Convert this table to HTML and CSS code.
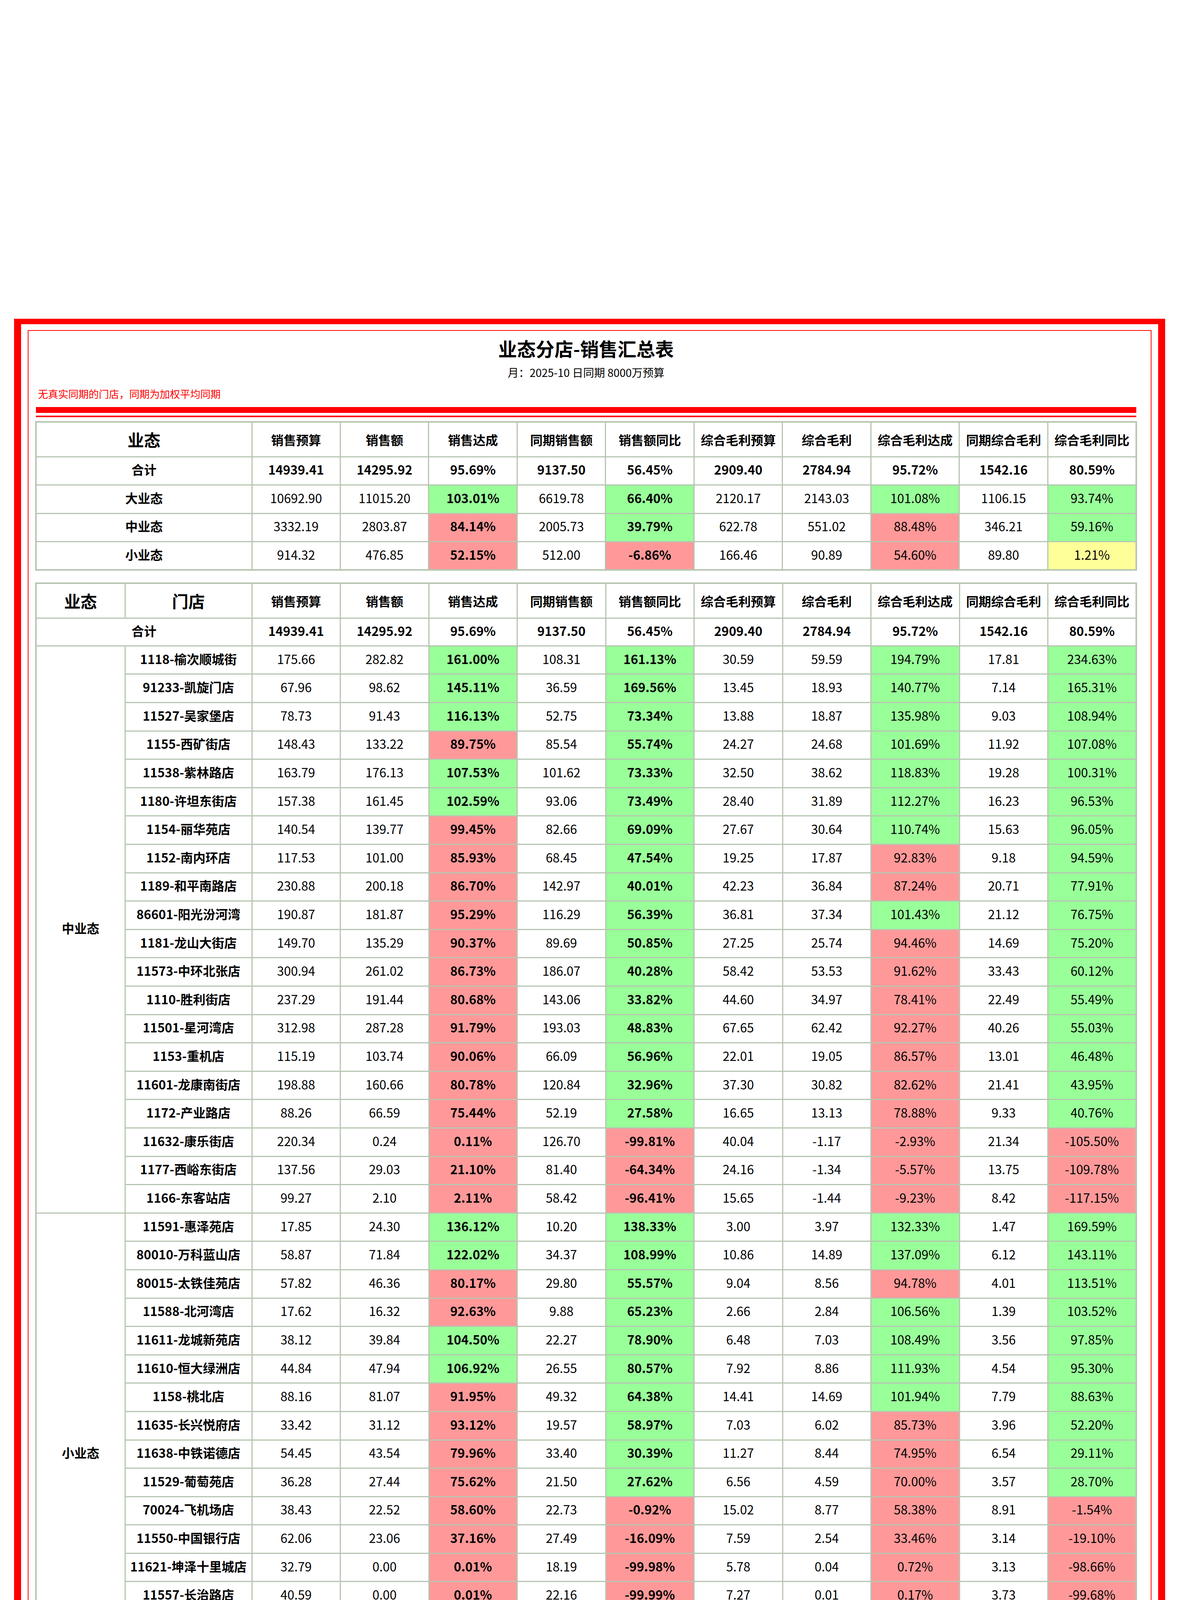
FILE: index.html
```html
<!DOCTYPE html>
<html lang="zh-CN">
<head>
<meta charset="utf-8">
<title>业态分店-销售汇总表</title>
<link rel="stylesheet" href="styles.css">
</head>
<body>
<div class="page">
<div class="frame">
<div class="inner">
<div class="title">业态分店-销售汇总表</div>
<div class="sub">月：2025-10 日同期 8000万预算</div>
<div class="note">无真实同期的门店，同期为加权平均同期</div>
<div class="bar"></div>
<div class="line"></div>

<table class="t1">
<colgroup><col class="c1"><col class="c2"><col><col><col><col><col><col><col><col><col><col></colgroup>
<tr class="hr"><th colspan="2" class="big">业态</th><th>销售预算</th><th>销售额</th><th>销售达成</th><th>同期销售额</th><th>销售额同比</th><th>综合毛利预算</th><th>综合毛利</th><th>综合毛利达成</th><th>同期综合毛利</th><th>综合毛利同比</th></tr>
<tr class="dr sum"><td colspan="2">合计</td><td>14939.41</td><td>14295.92</td><td>95.69%</td><td>9137.50</td><td>56.45%</td><td>2909.40</td><td>2784.94</td><td>95.72%</td><td>1542.16</td><td>80.59%</td></tr>
<tr class="dr"><td colspan="2" class="b">大业态</td><td>10692.90</td><td>11015.20</td><td class="b g">103.01%</td><td>6619.78</td><td class="b g">66.40%</td><td>2120.17</td><td>2143.03</td><td class="g">101.08%</td><td>1106.15</td><td class="g">93.74%</td></tr>
<tr class="dr"><td colspan="2" class="b">中业态</td><td>3332.19</td><td>2803.87</td><td class="b r">84.14%</td><td>2005.73</td><td class="b g">39.79%</td><td>622.78</td><td>551.02</td><td class="r">88.48%</td><td>346.21</td><td class="g">59.16%</td></tr>
<tr class="dr"><td colspan="2" class="b">小业态</td><td>914.32</td><td>476.85</td><td class="b r">52.15%</td><td>512.00</td><td class="b r">-6.86%</td><td>166.46</td><td>90.89</td><td class="r">54.60%</td><td>89.80</td><td class="y">1.21%</td></tr>
</table>

<table class="t2">
<colgroup><col class="c1"><col class="c2"><col><col><col><col><col><col><col><col><col><col></colgroup>
<tr class="hr"><th class="big">业态</th><th class="big">门店</th><th>销售预算</th><th>销售额</th><th>销售达成</th><th>同期销售额</th><th>销售额同比</th><th>综合毛利预算</th><th>综合毛利</th><th>综合毛利达成</th><th>同期综合毛利</th><th>综合毛利同比</th></tr>
<tr class="sr sum"><td colspan="2">合计</td><td>14939.41</td><td>14295.92</td><td>95.69%</td><td>9137.50</td><td>56.45%</td><td>2909.40</td><td>2784.94</td><td>95.72%</td><td>1542.16</td><td>80.59%</td></tr>

<tr class="dr"><td rowspan="20" class="b">中业态</td><td class="b">1118-榆次顺城街</td><td>175.66</td><td>282.82</td><td class="b g">161.00%</td><td>108.31</td><td class="b g">161.13%</td><td>30.59</td><td>59.59</td><td class="g">194.79%</td><td>17.81</td><td class="g">234.63%</td></tr>
<tr class="dr"><td class="b">91233-凯旋门店</td><td>67.96</td><td>98.62</td><td class="b g">145.11%</td><td>36.59</td><td class="b g">169.56%</td><td>13.45</td><td>18.93</td><td class="g">140.77%</td><td>7.14</td><td class="g">165.31%</td></tr>
<tr class="dr"><td class="b">11527-吴家堡店</td><td>78.73</td><td>91.43</td><td class="b g">116.13%</td><td>52.75</td><td class="b g">73.34%</td><td>13.88</td><td>18.87</td><td class="g">135.98%</td><td>9.03</td><td class="g">108.94%</td></tr>
<tr class="dr"><td class="b">1155-西矿街店</td><td>148.43</td><td>133.22</td><td class="b r">89.75%</td><td>85.54</td><td class="b g">55.74%</td><td>24.27</td><td>24.68</td><td class="g">101.69%</td><td>11.92</td><td class="g">107.08%</td></tr>
<tr class="dr"><td class="b">11538-紫林路店</td><td>163.79</td><td>176.13</td><td class="b g">107.53%</td><td>101.62</td><td class="b g">73.33%</td><td>32.50</td><td>38.62</td><td class="g">118.83%</td><td>19.28</td><td class="g">100.31%</td></tr>
<tr class="dr"><td class="b">1180-许坦东街店</td><td>157.38</td><td>161.45</td><td class="b g">102.59%</td><td>93.06</td><td class="b g">73.49%</td><td>28.40</td><td>31.89</td><td class="g">112.27%</td><td>16.23</td><td class="g">96.53%</td></tr>
<tr class="dr"><td class="b">1154-丽华苑店</td><td>140.54</td><td>139.77</td><td class="b r">99.45%</td><td>82.66</td><td class="b g">69.09%</td><td>27.67</td><td>30.64</td><td class="g">110.74%</td><td>15.63</td><td class="g">96.05%</td></tr>
<tr class="dr"><td class="b">1152-南内环店</td><td>117.53</td><td>101.00</td><td class="b r">85.93%</td><td>68.45</td><td class="b g">47.54%</td><td>19.25</td><td>17.87</td><td class="r">92.83%</td><td>9.18</td><td class="g">94.59%</td></tr>
<tr class="dr"><td class="b">1189-和平南路店</td><td>230.88</td><td>200.18</td><td class="b r">86.70%</td><td>142.97</td><td class="b g">40.01%</td><td>42.23</td><td>36.84</td><td class="r">87.24%</td><td>20.71</td><td class="g">77.91%</td></tr>
<tr class="dr"><td class="b">86601-阳光汾河湾</td><td>190.87</td><td>181.87</td><td class="b r">95.29%</td><td>116.29</td><td class="b g">56.39%</td><td>36.81</td><td>37.34</td><td class="g">101.43%</td><td>21.12</td><td class="g">76.75%</td></tr>
<tr class="dr"><td class="b">1181-龙山大街店</td><td>149.70</td><td>135.29</td><td class="b r">90.37%</td><td>89.69</td><td class="b g">50.85%</td><td>27.25</td><td>25.74</td><td class="r">94.46%</td><td>14.69</td><td class="g">75.20%</td></tr>
<tr class="dr"><td class="b">11573-中环北张店</td><td>300.94</td><td>261.02</td><td class="b r">86.73%</td><td>186.07</td><td class="b g">40.28%</td><td>58.42</td><td>53.53</td><td class="r">91.62%</td><td>33.43</td><td class="g">60.12%</td></tr>
<tr class="dr"><td class="b">1110-胜利街店</td><td>237.29</td><td>191.44</td><td class="b r">80.68%</td><td>143.06</td><td class="b g">33.82%</td><td>44.60</td><td>34.97</td><td class="r">78.41%</td><td>22.49</td><td class="g">55.49%</td></tr>
<tr class="dr"><td class="b">11501-星河湾店</td><td>312.98</td><td>287.28</td><td class="b r">91.79%</td><td>193.03</td><td class="b g">48.83%</td><td>67.65</td><td>62.42</td><td class="r">92.27%</td><td>40.26</td><td class="g">55.03%</td></tr>
<tr class="dr"><td class="b">1153-重机店</td><td>115.19</td><td>103.74</td><td class="b r">90.06%</td><td>66.09</td><td class="b g">56.96%</td><td>22.01</td><td>19.05</td><td class="r">86.57%</td><td>13.01</td><td class="g">46.48%</td></tr>
<tr class="dr"><td class="b">11601-龙康南街店</td><td>198.88</td><td>160.66</td><td class="b r">80.78%</td><td>120.84</td><td class="b g">32.96%</td><td>37.30</td><td>30.82</td><td class="r">82.62%</td><td>21.41</td><td class="g">43.95%</td></tr>
<tr class="dr"><td class="b">1172-产业路店</td><td>88.26</td><td>66.59</td><td class="b r">75.44%</td><td>52.19</td><td class="b g">27.58%</td><td>16.65</td><td>13.13</td><td class="r">78.88%</td><td>9.33</td><td class="g">40.76%</td></tr>
<tr class="dr"><td class="b">11632-康乐街店</td><td>220.34</td><td>0.24</td><td class="b r">0.11%</td><td>126.70</td><td class="b r">-99.81%</td><td>40.04</td><td>-1.17</td><td class="r">-2.93%</td><td>21.34</td><td class="r">-105.50%</td></tr>
<tr class="dr"><td class="b">1177-西峪东街店</td><td>137.56</td><td>29.03</td><td class="b r">21.10%</td><td>81.40</td><td class="b r">-64.34%</td><td>24.16</td><td>-1.34</td><td class="r">-5.57%</td><td>13.75</td><td class="r">-109.78%</td></tr>
<tr class="dr"><td class="b">1166-东客站店</td><td>99.27</td><td>2.10</td><td class="b r">2.11%</td><td>58.42</td><td class="b r">-96.41%</td><td>15.65</td><td>-1.44</td><td class="r">-9.23%</td><td>8.42</td><td class="r">-117.15%</td></tr>

<tr class="dr"><td rowspan="17" class="b">小业态</td><td class="b">11591-惠泽苑店</td><td>17.85</td><td>24.30</td><td class="b g">136.12%</td><td>10.20</td><td class="b g">138.33%</td><td>3.00</td><td>3.97</td><td class="g">132.33%</td><td>1.47</td><td class="g">169.59%</td></tr>
<tr class="dr"><td class="b">80010-万科蓝山店</td><td>58.87</td><td>71.84</td><td class="b g">122.02%</td><td>34.37</td><td class="b g">108.99%</td><td>10.86</td><td>14.89</td><td class="g">137.09%</td><td>6.12</td><td class="g">143.11%</td></tr>
<tr class="dr"><td class="b">80015-太铁佳苑店</td><td>57.82</td><td>46.36</td><td class="b r">80.17%</td><td>29.80</td><td class="b g">55.57%</td><td>9.04</td><td>8.56</td><td class="r">94.78%</td><td>4.01</td><td class="g">113.51%</td></tr>
<tr class="dr"><td class="b">11588-北河湾店</td><td>17.62</td><td>16.32</td><td class="b r">92.63%</td><td>9.88</td><td class="b g">65.23%</td><td>2.66</td><td>2.84</td><td class="g">106.56%</td><td>1.39</td><td class="g">103.52%</td></tr>
<tr class="dr"><td class="b">11611-龙城新苑店</td><td>38.12</td><td>39.84</td><td class="b g">104.50%</td><td>22.27</td><td class="b g">78.90%</td><td>6.48</td><td>7.03</td><td class="g">108.49%</td><td>3.56</td><td class="g">97.85%</td></tr>
<tr class="dr"><td class="b">11610-恒大绿洲店</td><td>44.84</td><td>47.94</td><td class="b g">106.92%</td><td>26.55</td><td class="b g">80.57%</td><td>7.92</td><td>8.86</td><td class="g">111.93%</td><td>4.54</td><td class="g">95.30%</td></tr>
<tr class="dr"><td class="b">1158-桃北店</td><td>88.16</td><td>81.07</td><td class="b r">91.95%</td><td>49.32</td><td class="b g">64.38%</td><td>14.41</td><td>14.69</td><td class="g">101.94%</td><td>7.79</td><td class="g">88.63%</td></tr>
<tr class="dr"><td class="b">11635-长兴悦府店</td><td>33.42</td><td>31.12</td><td class="b r">93.12%</td><td>19.57</td><td class="b g">58.97%</td><td>7.03</td><td>6.02</td><td class="r">85.73%</td><td>3.96</td><td class="g">52.20%</td></tr>
<tr class="dr"><td class="b">11638-中铁诺德店</td><td>54.45</td><td>43.54</td><td class="b r">79.96%</td><td>33.40</td><td class="b g">30.39%</td><td>11.27</td><td>8.44</td><td class="r">74.95%</td><td>6.54</td><td class="g">29.11%</td></tr>
<tr class="dr"><td class="b">11529-葡萄苑店</td><td>36.28</td><td>27.44</td><td class="b r">75.62%</td><td>21.50</td><td class="b g">27.62%</td><td>6.56</td><td>4.59</td><td class="r">70.00%</td><td>3.57</td><td class="g">28.70%</td></tr>
<tr class="dr"><td class="b">70024-飞机场店</td><td>38.43</td><td>22.52</td><td class="b r">58.60%</td><td>22.73</td><td class="b r">-0.92%</td><td>15.02</td><td>8.77</td><td class="r">58.38%</td><td>8.91</td><td class="r">-1.54%</td></tr>
<tr class="dr"><td class="b">11550-中国银行店</td><td>62.06</td><td>23.06</td><td class="b r">37.16%</td><td>27.49</td><td class="b r">-16.09%</td><td>7.59</td><td>2.54</td><td class="r">33.46%</td><td>3.14</td><td class="r">-19.10%</td></tr>
<tr class="dr"><td class="b">11621-坤泽十里城店</td><td>32.79</td><td>0.00</td><td class="b r">0.01%</td><td>18.19</td><td class="b r">-99.98%</td><td>5.78</td><td>0.04</td><td class="r">0.72%</td><td>3.13</td><td class="r">-98.66%</td></tr>
<tr class="dr"><td class="b">11557-长治路店</td><td>40.59</td><td>0.00</td><td class="b r">0.01%</td><td>22.16</td><td class="b r">-99.99%</td><td>7.27</td><td>0.01</td><td class="r">0.17%</td><td>3.73</td><td class="r">-99.68%</td></tr>
<tr class="dr"><td class="b">11627-富力启栖谷店</td><td>13.79</td><td>0.01</td><td class="b r">0.08%</td><td>7.49</td><td class="b r">-99.85%</td><td>2.41</td><td>-0.05</td><td class="r">-2.27%</td><td>1.22</td><td class="r">-104.47%</td></tr>
<tr class="dr"><td class="b">11622-万科公园里店</td><td>25.04</td><td>0.19</td><td class="b r">0.77%</td><td>14.21</td><td class="b r">-98.65%</td><td>4.54</td><td>-0.17</td><td class="r">-3.74%</td><td>2.40</td><td class="r">-107.07%</td></tr>
<tr class="dr"><td class="b">11612-太化和平苑店</td><td>36.83</td><td>1.30</td><td class="b r">3.53%</td><td>20.65</td><td class="b r">-93.71%</td><td>6.38</td><td>-0.34</td><td class="r">-5.27%</td><td>3.38</td><td class="r">-109.95%</td></tr>

<tr class="dr"><td rowspan="22" class="b">大业态</td><td class="b">1103-平阳店</td><td>755.66</td><td>1053.22</td><td class="b g">139.38%</td><td>467.41</td><td class="b g">125.33%</td><td>152.91</td><td>208.36</td><td class="g">136.26%</td><td>79.77</td><td class="g">161.21%</td></tr>
<tr class="dr"><td class="b">1113-康宁街店</td><td>1071.61</td><td>1413.55</td><td class="b g">131.91%</td><td>659.39</td><td class="b g">114.37%</td><td>213.65</td><td>274.51</td><td class="g">128.49%</td><td>108.26</td><td class="g">153.56%</td></tr>
<tr class="dr"><td class="b">1121-迎泽西大街</td><td>632.50</td><td>706.47</td><td class="b g">111.70%</td><td>388.28</td><td class="b g">81.95%</td><td>131.27</td><td>133.98</td><td class="g">102.06%</td><td>57.95</td><td class="g">131.20%</td></tr>
<tr class="dr"><td class="b">1128-体育路店</td><td>477.14</td><td>501.13</td><td class="b g">105.03%</td><td>293.68</td><td class="b g">70.64%</td><td>89.77</td><td>101.88</td><td class="g">113.49%</td><td>44.37</td><td class="g">129.62%</td></tr>
<tr class="dr"><td class="b">1101-迎宾店</td><td>1413.82</td><td>1815.77</td><td class="b g">128.43%</td><td>898.07</td><td class="b g">102.19%</td><td>275.95</td><td>364.13</td><td class="g">131.95%</td><td>159.75</td><td class="g">127.94%</td></tr>
<tr class="dr"><td class="b">1105-三墙路店</td><td>377.62</td><td>403.43</td><td class="b g">106.83%</td><td>226.75</td><td class="b g">77.92%</td><td>74.63</td><td>75.28</td><td class="g">100.87%</td><td>35.13</td><td class="g">114.28%</td></tr>
<tr class="dr"><td class="b">1108-滨汾路店</td><td>443.43</td><td>483.39</td><td class="b g">109.01%</td><td>272.27</td><td class="b g">77.54%</td><td>100.53</td><td>89.04</td><td class="r">88.57%</td><td>42.96</td><td class="g">107.28%</td></tr>
<tr class="dr"><td class="b">11634-双塔东街店</td><td>366.95</td><td>374.63</td><td class="b g">102.09%</td><td>219.23</td><td class="b g">70.88%</td><td>75.29</td><td>73.99</td><td class="r">98.26%</td><td>37.41</td><td class="g">97.76%</td></tr>
<tr class="dr"><td class="b">1107-五一路店</td><td>678.39</td><td>693.44</td><td class="b g">102.22%</td><td>418.67</td><td class="b g">65.63%</td><td>138.97</td><td>134.13</td><td class="r">96.52%</td><td>67.92</td><td class="g">97.49%</td></tr>
<tr class="dr"><td class="b">11630-凯旋街店</td><td>479.94</td><td>513.50</td><td class="b g">106.99%</td><td>292.31</td><td class="b g">75.67%</td><td>88.67</td><td>97.03</td><td class="g">109.43%</td><td>50.72</td><td class="g">91.31%</td></tr>
<tr class="dr"><td class="b">11631-羊市街店</td><td>321.79</td><td>331.90</td><td class="b g">103.14%</td><td>194.85</td><td class="b g">70.33%</td><td>66.05</td><td>59.55</td><td class="r">90.16%</td><td>31.58</td><td class="g">88.56%</td></tr>
<tr class="dr"><td class="b">26003-万达超市</td><td>321.27</td><td>310.23</td><td class="b r">96.57%</td><td>200.51</td><td class="b g">54.72%</td><td>63.06</td><td>66.28</td><td class="g">105.11%</td><td>35.90</td><td class="g">84.60%</td></tr>
<tr class="dr"><td class="b">11594-公元时代城</td><td>431.94</td><td>423.84</td><td class="b r">98.12%</td><td>272.03</td><td class="b g">55.80%</td><td>84.68</td><td>83.23</td><td class="r">98.29%</td><td>46.16</td><td class="g">80.30%</td></tr>
<tr class="dr"><td class="b">1122-兴华街店</td><td>481.26</td><td>449.23</td><td class="b r">93.34%</td><td>298.06</td><td class="b g">50.72%</td><td>97.36</td><td>84.85</td><td class="r">87.15%</td><td>48.49</td><td class="g">74.98%</td></tr>
<tr class="dr"><td class="b">11515-龙城北街店</td><td>233.40</td><td>182.19</td><td class="b r">78.06%</td><td>145.02</td><td class="b g">25.63%</td><td>41.94</td><td>35.54</td><td class="r">84.73%</td><td>22.46</td><td class="g">58.22%</td></tr>
<tr class="dr"><td class="b">11599-印象城店</td><td>502.56</td><td>409.04</td><td class="b r">81.39%</td><td>315.00</td><td class="b g">29.86%</td><td>93.15</td><td>81.41</td><td class="r">87.39%</td><td>54.43</td><td class="g">49.56%</td></tr>
<tr class="dr"><td class="b">1125-尖草坪店</td><td>415.60</td><td>322.31</td><td class="b r">77.55%</td><td>251.20</td><td class="b g">28.31%</td><td>86.47</td><td>58.55</td><td class="r">67.71%</td><td>39.72</td><td class="g">47.39%</td></tr>
<tr class="dr"><td class="b">11640-奥莱超市</td><td>265.71</td><td>173.95</td><td class="b r">65.47%</td><td>173.19</td><td class="b y">0.44%</td><td>49.28</td><td>35.61</td><td class="r">72.26%</td><td>29.52</td><td class="g">20.61%</td></tr>
<tr class="dr"><td class="b">11639-临汾店</td><td>313.29</td><td>197.39</td><td class="b r">63.00%</td><td>197.40</td><td class="b r">-0.01%</td><td>60.28</td><td>38.60</td><td class="r">64.04%</td><td>34.88</td><td class="g">10.68%</td></tr>
<tr class="dr"><td class="b">11629-朔州民福店</td><td>330.15</td><td>206.31</td><td class="b r">62.49%</td><td>207.67</td><td class="b r">-0.65%</td><td>63.90</td><td>40.40</td><td class="r">63.22%</td><td>37.82</td><td class="y">6.80%</td></tr>
<tr class="dr"><td class="b">11619-忻州店</td><td>281.96</td><td>35.95</td><td class="b r">12.75%</td><td>171.19</td><td class="b r">-79.00%</td><td>54.72</td><td>5.83</td><td class="r">10.66%</td><td>30.57</td><td class="r">-80.92%</td></tr>
<tr class="dr"><td class="b">26001-学府超市</td><td>96.93</td><td>14.33</td><td class="b r">14.79%</td><td>57.61</td><td class="b r">-75.12%</td><td>17.64</td><td>0.72</td><td class="r">4.07%</td><td>9.70</td><td class="r">-92.60%</td></tr>
</table>

<div class="line-b1"></div>
<div class="line-b2"></div>
</div>
</div>
</div>
</body>
</html>
```

FILE: styles.css
```css
html, body {
  margin: 0;
  padding: 0;
  background: #ffffff;
}

body {
  font-family: "Noto Sans CJK SC", "Noto Sans", "DejaVu Sans", sans-serif;
  color: #000000;
  width: 3022px;
}

.page {
  padding: 816px 0 0 36px;
}

.frame {
  width: 2948px;
  box-sizing: border-box;
  border-style: solid;
  border-color: #ff0000;
  border-width: 14px 18px 17px 18px;
  padding: 15px 17px 12px 17px;
}

.inner {
  border: 2px solid #ff0000;
  padding: 0 35px 13px 17px;
}

.title {
  font-size: 48px;
  font-weight: 700;
  line-height: 60px;
  text-align: center;
  margin-top: 14px;
}

.sub {
  font-size: 28px;
  line-height: 40px;
  text-align: center;
  margin-top: 12px;
}

.note {
  font-size: 26px;
  line-height: 36px;
  color: #ff0000;
  margin-top: 17px;
  padding-left: 7px;
}

.bar {
  height: 15px;
  background: #ff0000;
  margin: 16px 2px 0 2px;
}

.line {
  height: 4px;
  background: #ff0000;
  margin: 7px 2px 10px 2px;
}

.line-b1 {
  height: 2px;
  background: #ff0000;
  margin: 0 2px;
}

.line-b2 {
  height: 4px;
  background: #ff0000;
  margin: 3px 2px 0 2px;
}

table {
  border-collapse: collapse;
  table-layout: fixed;
  width: 2822px;
  border: 4px solid #b7c6b2;
}

.t2 {
  margin-top: 30px;
}

col.c1 {
  width: 228px;
}

col.c2 {
  width: 325px;
}

th, td {
  border: 3px solid #b7c6b2;
  text-align: center;
  vertical-align: middle;
  font-size: 32px;
  white-space: nowrap;
}

th {
  font-weight: 700;
  padding: 0;
  line-height: 40px;
}

td {
  font-weight: 400;
  padding: 0 0 8px 0;
  line-height: 40px;
}

th.big {
  font-size: 42px;
}

tr.hr {
  height: 89px;
}

tr.dr {
  height: 72.6px;
}

tr.sr {
  height: 71px;
}

tr.sum td {
  font-weight: 700;
}

.b {
  font-weight: 700;
}

.g {
  background: #99ff99;
}

.r {
  background: #ff9999;
}

.y {
  background: #ffff99;
}
```
